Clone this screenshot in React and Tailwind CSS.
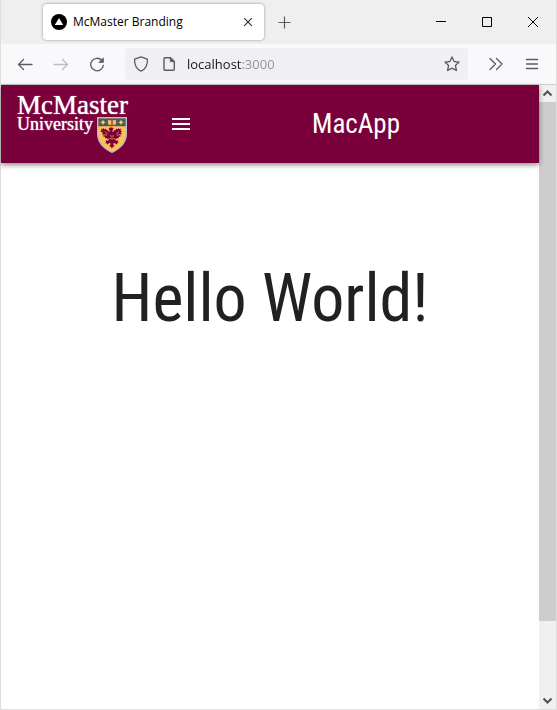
import React from "react";

function TabStrip() {
  return (
    <div className="flex h-11 items-center bg-[#efefef] text-black">
      <div className="ml-[42px] flex h-9 w-[221px] items-center rounded bg-white px-2 shadow-[0_0_3px_rgba(0,0,0,0.4)]">
        <svg className="size-4 shrink-0" viewBox="0 0 16 16" aria-hidden="true">
          <circle cx="8" cy="8" r="8" />
          <path d="M8 4l4.2 7H3.8z" fill="#fff" />
        </svg>
        <span className="ml-1.5 flex-1 text-xs whitespace-nowrap">McMaster Branding</span>
        <button type="button" aria-label="Close tab" className="flex size-4 items-center justify-center">
          <svg className="size-4" viewBox="0 0 16 16" fill="none" stroke="#2b2a33">
            <path d="M4.2 4.2l7.6 7.6M11.8 4.2l-7.6 7.6" strokeWidth="1.1" />
          </svg>
        </button>
      </div>
      <button type="button" aria-label="New tab" className="ml-3 flex size-4 items-center justify-center">
        <svg className="size-4" viewBox="0 0 16 16" fill="none" stroke="#5b5b66" strokeWidth="1.2">
          <path d="M8.5 2.5v12M2.5 8.5h12" />
        </svg>
      </button>
      <div className="ml-auto flex h-full">
        <button type="button" aria-label="Minimize" className="flex w-[46px] items-center justify-center">
          <svg className="size-3" viewBox="0 0 12 12" stroke="#000">
            <path d="M1 5.5h10" />
          </svg>
        </button>
        <button type="button" aria-label="Maximize" className="flex w-[46px] items-center justify-center">
          <svg className="size-3" viewBox="0 0 12 12" fill="none" stroke="#000">
            <path d="M1.5 1.5h9v9h-9z" />
          </svg>
        </button>
        <button type="button" aria-label="Close window" className="flex w-[46px] items-center justify-center">
          <svg className="size-3" viewBox="0 0 12 12" fill="none" stroke="#000">
            <path d="M1 1l10 10M11 1L1 11" />
          </svg>
        </button>
      </div>
    </div>
  );
}

function ToolButton({ label, dim, children }) {
  return (
    <button
      type="button"
      aria-label={label}
      className={dim ? "flex size-9 items-center justify-center text-[#bdbdc3]" : "flex size-9 items-center justify-center text-[#5b5b66]"}
    >
      <svg
        className="size-4"
        viewBox="0 0 16 16"
        fill="none"
        stroke="currentColor"
        strokeWidth="1.3"
        strokeLinecap="round"
        strokeLinejoin="round"
        aria-hidden="true"
      >
        {children}
      </svg>
    </button>
  );
}

function Toolbar() {
  return (
    <div className="flex h-10 items-center bg-[#f9f9fb] pl-1.5">
      <ToolButton label="Back">
        <path d="M15 8.5H1.5M6.5 3.5l-5 5 5 5" />
      </ToolButton>
      <ToolButton label="Forward" dim>
        <path d="M1 8.5h13.5M9.5 3.5l5 5-5 5" />
      </ToolButton>
      <ToolButton label="Reload">
        <path d="M14.3 9.3A6.3 6.3 0 1 1 12.6 4.2" />
        <path d="M14.4 2.2v4.2h-4.2z" fill="currentColor" strokeWidth="0.8" />
      </ToolButton>
      <div className="ml-2.5 flex h-8 min-w-0 flex-1 items-center rounded bg-[#f0eff4] px-2 text-[#5b5b66]">
        <svg className="size-4 shrink-0" viewBox="0 0 16 16" fill="none" stroke="currentColor" strokeWidth="1.3" strokeLinejoin="round" aria-hidden="true">
          <path d="M8 .8l6.4 2.3c.3 5.6-1.4 9.9-6.4 12.1C3 13 1.3 8.7 1.6 3.1z" />
        </svg>
        <svg className="ml-3 size-4 shrink-0" viewBox="0 0 16 16" fill="none" stroke="currentColor" strokeWidth="1.4" strokeLinejoin="round" aria-hidden="true">
          <path d="M4 1.7h5.5L13.3 5.5v7.8a1 1 0 0 1-1 1H4a1 1 0 0 1-1-1V2.7a1 1 0 0 1 1-1z" />
          <path d="M9.3 1.7v4h4z" fill="currentColor" strokeWidth="0.8" />
        </svg>
        <input
          type="text"
          aria-label="Address"
          defaultValue="localhost:3000"
          className="ml-2.5 h-6 min-w-0 flex-1 bg-[linear-gradient(to_right,#15141a_54px,#8f8f9d_54px)] bg-clip-text text-[13px] text-transparent caret-black outline-none"
        />
        <button type="button" aria-label="Bookmark this page">
          <svg className="block size-4" viewBox="0 0 16 16" fill="none" stroke="currentColor" strokeWidth="1.3" strokeLinejoin="round">
            <path d="M8 .9l2.1 4.6 5 .6-3.7 3.4 1 5L8 12.1l-4.4 2.4 1-5L.9 6.1l5-.6z" />
          </svg>
        </button>
      </div>
      <div className="ml-2.5 flex pr-1.5">
        <ToolButton label="More tools">
          <path d="M2 2.5l5.5 5.5L2 13.5M8.5 2.5L14 8l-5.5 5.5" />
        </ToolButton>
        <ToolButton label="Application menu">
          <path d="M2.5 3.5h11M2.5 8h11M2.5 12.5h11" />
        </ToolButton>
      </div>
    </div>
  );
}

function Crest() {
  return (
    <svg className="block h-9 w-[30px]" viewBox="0 0 30 36" aria-hidden="true">
      <path d="M.7.7h28.600v16c0 9-6 14.500-14.300 18.600C6.700 31.200.7 25.700.7 16.700z" fill="#fdbf57" stroke="#b9bcc0" strokeWidth="1.4" />
      <path d="M1.4 1.4h27.200v7.800H1.4z" fill="#495965" />
      <path d="M6 2.800l.9 1.700 1.800.8-1.800.9L6 8l-.9-1.800-1.800-.9 1.800-.8zM24 2.800l.9 1.700 1.800.8-1.800.9L24 8l-.9-1.800-1.800-.9 1.800-.8z" fill="#fdd56b" />
      <path d="M11 3l4 .6 4-.6v4.500l-4 .6-4-.6z" fill="#fdbf57" />
      <path d="M15 3.500v4.500" stroke="#7a003c" strokeWidth="1" />
      <path
        d="M4 11.500l1.800.8.500-1.300 1.500 1.600 1-1.200 1 2 1.400-.4.200 1.500 1.300.4-.3-2.200-.9-.8 1.500-1.300h2.200l1.500 1.200-1 .9-.3 2.200 1.300-.4.200-1.500 1.400.4 1-2 1 1.200 1.500-1.600.5 1.300 1.800-.8-.5 2.200 1.500.6-1.300 1.400 1 1.500-1.600.7.400 1.700-1.800.2-.2 1.700-1.800-.5-.8 1.400-1.500-1-.6.700 2.600 1.600 1.800-.6-.6 1.700 1 1.500-1.700-.1-.5 1.600-1.300-1.400-1.700-.6-.1 1.800 1.300 1.900-1.600.1-1.200 2-1.200-2-1.600-.1 1.300-1.900-.1-1.800-1.700.6-1.300 1.400-.5-1.600-1.700.1 1-1.500-.6-1.700 1.800.6 2.600-1.600-.6-.7-1.500 1-.8-1.400-1.800.5-.2-1.700-1.800-.2.400-1.700-1.600-.7 1-1.500L3 14.300l1.500-.6z"
        fill="#7a003c"
      />
      <path d="M8 14.500l2.800 2.800M22 14.500l-2.800 2.800M6.500 17.500l3.500.8M23.500 17.500l-3.500.8M13 18.500l2 1 2-1M13 21l2 1 2-1" fill="none" stroke="#fdbf57" strokeWidth="0.7" />
    </svg>
  );
}

function AppBar() {
  return (
    <header className="z-10 flex h-[78px] items-center bg-[#7a003c] pl-4 text-white shadow-[0_2px_5px_rgba(0,0,0,0.45)]">
      <a
        href="#home"
        aria-label="McMaster University"
        className="relative block w-[110px] font-['Liberation_Serif',serif] whitespace-nowrap [text-shadow:0_0_1px_#ffffff]"
      >
        <span className="block h-5 text-[27px] leading-5">McMaster</span>
        <span className="block h-[38px] text-lg leading-[18px]">University</span>
        <span className="absolute right-0 bottom-0">
          <Crest />
        </span>
      </a>
      <button type="button" aria-label="Open menu" className="ml-[42px] flex size-6 items-center justify-center">
        <svg className="size-6" viewBox="0 0 24 24" fill="currentColor">
          <path d="M3 18h18v-2H3v2zm0-5h18v-2H3v2zm0-7v2h18V6H3z" />
        </svg>
      </button>
      <div className="flex-1 pr-5 text-center font-['Roboto_Condensed',Roboto,sans-serif] text-[27px] leading-8">MacApp</div>
    </header>
  );
}

function ScrollBar() {
  return (
    <div className="flex w-[17px] shrink-0 flex-col bg-[#f0f0f0] text-[#505050]" aria-hidden="true">
      <svg className="h-[17px] w-full" viewBox="0 0 17 17" fill="none" stroke="currentColor" strokeWidth="2">
        <path d="M4.5 10.5l4-4 4 4" />
      </svg>
      <div className="flex flex-1 flex-col">
        <div className="grow-[88] bg-[#cdcdcd]" />
        <div className="grow-[12]" />
      </div>
      <svg className="h-[17px] w-full" viewBox="0 0 17 17" fill="none" stroke="currentColor" strokeWidth="2">
        <path d="M4.5 6.5l4 4 4-4" />
      </svg>
    </div>
  );
}

export default function App() {
  return (
    <div className="flex min-h-screen flex-col border-r border-b border-l border-[#dedede] bg-white font-['Open_Sans','Noto_Sans',sans-serif]">
      <TabStrip />
      <Toolbar />
      <div className="flex flex-1 border-t border-[#cccccc]">
        <div className="flex min-w-0 flex-1 flex-col">
          <AppBar />
          <main className="px-4 pt-24 text-center">
            <h1 className="font-['Roboto_Condensed',Roboto,sans-serif] text-[66px] leading-[80px] text-[#212121]">Hello World!</h1>
          </main>
        </div>
        <ScrollBar />
      </div>
    </div>
  );
}
